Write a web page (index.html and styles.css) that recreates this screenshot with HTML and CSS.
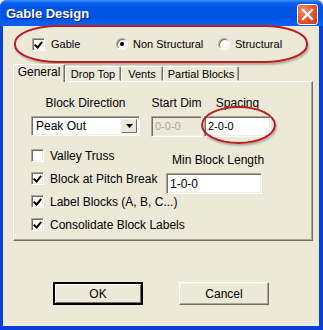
FILE: index.html
```html
<!DOCTYPE html>
<html lang="en">

<head>
  <meta charset="UTF-8">
  <title>Gable Design</title>
  <link rel="stylesheet" href="styles.css">
</head>

<body>
  <div class="window">
    <div class="titlebar">
      <span class="title">Gable Design</span>
      <span class="close">
        <svg width="13" height="13" viewBox="0 0 13 13"><path d="M2 2 L11 11 M11 2 L2 11" stroke="#fff" stroke-width="2.2" stroke-linecap="square"/></svg>
      </span>
    </div>

    <div class="content">
      <div class="options">
        <label class="opt"><span class="check on"></span>Gable</label>
        <label class="opt radio-opt"><span class="radio on"></span>Non Structural</label>
        <label class="opt radio-opt"><span class="radio"></span>Structural</label>
      </div>

      <div class="tabs">
        <span class="tab active">General</span>
        <span class="tab tab-drop">Drop Top</span>
        <span class="tab tab-vents">Vents</span>
        <span class="tab tab-partial">Partial Blocks</span>
      </div>

      <div class="panel">
        <div class="fields">
          <span class="field-label">Block Direction</span>
          <span class="field-label">Start Dim</span>
          <span class="field-label">Spacing</span>
          <div class="select">
            <span class="select-text">Peak Out</span>
            <span class="select-btn"><svg width="7" height="4" viewBox="0 0 7 4"><path d="M0 0 H7 L3.5 4 Z" fill="#000"/></svg></span>
          </div>
          <span class="input disabled">0-0-0</span>
          <span class="input">2-0-0</span>
        </div>

        <div class="lower">
          <div class="checks">
            <label class="opt"><span class="check"></span>Valley Truss</label>
            <label class="opt"><span class="check on"></span>Block at Pitch Break</label>
            <label class="opt"><span class="check on"></span>Label Blocks (A, B, C...)</label>
            <label class="opt"><span class="check on"></span>Consolidate Block Labels</label>
          </div>
          <div class="min-block">
            <span class="field-label">Min Block Length</span>
            <span class="input wide">1-0-0</span>
          </div>
        </div>
      </div>

      <div class="actions">
        <button class="btn default">OK</button>
        <button class="btn">Cancel</button>
      </div>
    </div>

    <!-- red annotation rings drawn over the dialog -->
    <span class="ring ring-top"></span>
    <span class="ring ring-spacing"></span>
  </div>
</body>

</html>
```

FILE: styles.css
```css
body {
  margin: 0;
  font-family: "Liberation Sans", Arial, sans-serif;
  font-size: 11px;
  color: #000;
  background: #ece9d8;
}

.window {
  position: relative;
  width: 323px;
  height: 330px;
  box-sizing: border-box;
  display: flex;
  flex-direction: column;
  background: #0840d8;
  padding: 0 4px 4px 3px;
  border-radius: 7px 7px 0 0;
  overflow: hidden;
}

.titlebar {
  height: 26px;
  margin: 0 -4px 0 -3px;
  padding: 0 5px 0 6px;
  display: flex;
  align-items: center;
  justify-content: space-between;
  background: linear-gradient(#3d95ff 0, #0a5ff2 3px, #0055e5 8px, #0053e1 18px, #0662f0 24px, #0b5bea 26px);
}

.title {
  color: #fff;
  font-weight: bold;
  font-size: 13px;
  text-shadow: 1px 1px #0a1e8a;
  padding-top: 1px;
}

.close {
  width: 21px;
  height: 21px;
  box-sizing: border-box;
  border: 1px solid #fff;
  border-radius: 3px;
  background: radial-gradient(circle at 30% 30%, #f08f6d, #e1542c 55%, #c2371a);
  display: flex;
  align-items: center;
  justify-content: center;
  margin-top: 2px;
}

.content {
  flex: 1;
  background: #ece9d8;
  display: flex;
  flex-direction: column;
}

.options {
  height: 36px;
  display: flex;
  align-items: center;
  padding-left: 29px;
}

.opt {
  display: flex;
  align-items: center;
  gap: 6px;
  white-space: nowrap;
}

.radio-opt {
  gap: 5px;
}

.options .opt:nth-child(1) { width: 84px; }
.options .opt:nth-child(2) { width: 102px; }

.check {
  flex-shrink: 0;
  width: 13px;
  height: 13px;
  box-sizing: border-box;
  background: #fff;
  border: 1px solid;
  border-color: #aca899 #fff #fff #aca899;
  box-shadow: inset 1px 1px #716f64, inset -1px -1px #f1efe2;
  display: inline-block;
  position: relative;
}

.check.on::after {
  content: "";
  position: absolute;
  left: 3px;
  top: 1px;
  width: 3px;
  height: 6px;
  border: solid #000;
  border-width: 0 2px 2px 0;
  transform: rotate(40deg);
}

.radio {
  flex-shrink: 0;
  width: 12px;
  height: 12px;
  box-sizing: border-box;
  border-radius: 50%;
  background: #fff;
  border: 1px solid;
  border-color: #aca899 #fff #fff #aca899;
  box-shadow: inset 1px 1px #716f64, inset -1px -1px #f1efe2;
  display: inline-flex;
  align-items: center;
  justify-content: center;
}

.radio.on::after {
  content: "";
  width: 4px;
  height: 4px;
  border-radius: 50%;
  background: #000;
}

.tabs {
  display: flex;
  align-items: flex-end;
  margin: 2px 0 0 10px;
  height: 17px;
  position: relative;
  z-index: 1;
}

.tab {
  height: 15px;
  box-sizing: border-box;
  padding: 1px 0 0;
  text-align: center;
  border: 1px solid;
  border-color: #fff #716f64 transparent #fff;
  box-shadow: inset -1px 0 #aca899;
  border-radius: 2px 2px 0 0;
  font-size: 11px;
  line-height: 13px;
}

.tab.active {
  width: 52px;
  height: 18px;
  margin-bottom: -1px;
  background: #ece9d8;
  border-bottom: 0;
  font-size: 12px;
}

.tab-drop { width: 56px; }
.tab-vents { width: 42px; }
.tab-partial { width: 76px; }

.panel {
  width: 300px;
  height: 160px;
  margin-left: 10px;
  box-sizing: border-box;
  border: 1px solid;
  border-color: #fff #716f64 #716f64 #fff;
  box-shadow: inset -1px -1px #aca899;
  padding: 14px 0 0 17px;
}

.fields {
  display: grid;
  grid-template-columns: 109px 51px 58px;
  column-gap: 11px;
  row-gap: 6px;
}

.fields > :nth-child(3n+3) {
  margin-left: -9px;
}

.field-label {
  text-align: center;
  font-size: 12px;
  line-height: 14px;
}

.select {
  height: 20px;
  box-sizing: border-box;
  background: #fff;
  border: 1px solid;
  border-color: #aca899 #fff #fff #aca899;
  box-shadow: inset 1px 1px #716f64, inset -1px -1px #f1efe2;
  display: flex;
  align-items: center;
  padding: 2px;
}

.select-text {
  flex: 1;
  padding-left: 2px;
  font-size: 12px;
}

.select-btn {
  width: 16px;
  height: 14px;
  box-sizing: border-box;
  background: #ece9d8;
  border: 1px solid;
  border-color: #f1efe2 #716f64 #716f64 #f1efe2;
  display: flex;
  align-items: center;
  justify-content: center;
}

.input {
  height: 21px;
  box-sizing: border-box;
  background: #fff;
  border: 1px solid;
  border-color: #aca899 #fff #fff #aca899;
  box-shadow: inset 1px 1px #716f64, inset -1px -1px #f1efe2;
  padding: 3px 3px 0;
  font-size: 11px;
}

.input.disabled {
  background: #ece9d8;
  color: #aca899;
}

.lower {
  display: flex;
  margin-top: 12px;
}

.checks {
  width: 135px;
  display: flex;
  flex-direction: column;
  gap: 10px;
}

.checks .opt {
  font-size: 12px;
  line-height: 12px;
}

.min-block {
  display: flex;
  flex-direction: column;
  gap: 6px;
  margin-top: 4px;
}

.min-block .field-label {
  text-align: left;
  padding-left: 6px;
}

.input.wide {
  width: 96px;
  font-size: 12px;
}

.actions {
  display: flex;
  gap: 36px;
  margin: 41px 0 0 50px;
}

.btn {
  width: 90px;
  height: 23px;
  font-family: "Liberation Sans", Arial, sans-serif;
  font-size: 12px;
  background: #ece9d8;
  border: 1px solid;
  border-color: #fff #716f64 #716f64 #fff;
  box-shadow: inset -1px -1px #aca899, inset 1px 1px #f1efe2;
  padding: 0;
}

.btn.default {
  border: 2px solid;
  border-color: #000;
  box-shadow: inset 1px 1px #fff, inset -1px -1px #716f64;
}

.ring {
  position: absolute;
  border: 2px solid #c01a20;
  border-radius: 50%;
  box-shadow: 1px 2px 2px rgba(0, 0, 0, 0.25);
  pointer-events: none;
}

.ring-top {
  left: 14px;
  top: 25px;
  width: 290px;
  height: 34px;
  border-radius: 44px / 18px;
}

.ring-spacing {
  left: 201px;
  top: 106px;
  width: 71px;
  height: 34px;
}
```
